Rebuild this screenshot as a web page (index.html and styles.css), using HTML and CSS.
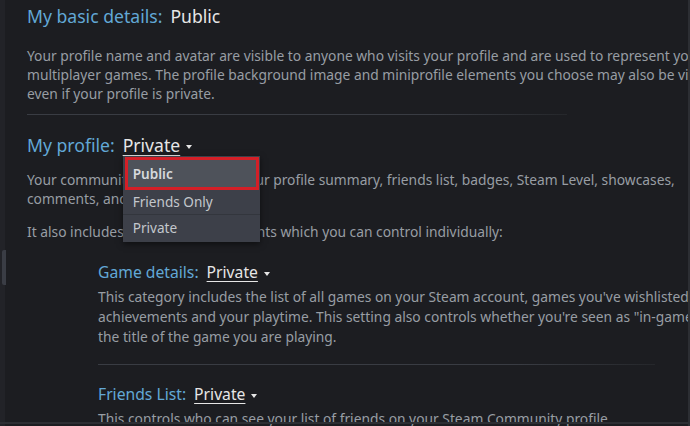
FILE: index.html
```html
<!DOCTYPE html>
<html>
<head>
<meta charset="utf-8">
<link rel="stylesheet" href="styles.css">
</head>
<body>
<div class="frame">
  <div class="left-strip"><div class="tab"></div></div>
  <div class="content">
    <section class="block">
      <h2 class="title"><span class="label">My basic details:</span><span class="value">Public</span></h2>
      <p class="desc first">Your profile name and avatar are visible to anyone who visits your profile and are used to represent you in<br>multiplayer games. The profile background image and miniprofile elements you choose may also be visible<br>even if your profile is private.</p>
    </section>
    <div class="sep"></div>
    <section class="block">
      <h2 class="title"><span class="label">My profile:</span><span class="drop"><span class="dtext">Private</span><span class="caret"></span>
        <span class="menu">
          <span class="item active">Public</span>
          <span class="item">Friends Only</span>
          <span class="item">Private</span>
        </span></span></h2>
      <p class="desc second">Your community profile includes your profile summary, friends list, badges, Steam Level, showcases,<br>comments, and group membership.</p>
      <p class="desc also">It also includes more specific elements which you can control individually:</p>
    </section>
    <section class="sub">
      <h3 class="title small"><span class="label">Game details:</span><span class="drop"><span class="dtext">Private</span><span class="caret"></span></span></h3>
      <p class="desc">This category includes the list of all games on your Steam account, games you've wishlisted, your<br>achievements and your playtime. This setting also controls whether you're seen as "in-game" and<br>the title of the game you are playing.</p>
      <div class="sep sub-sep"></div>
      <h3 class="title small"><span class="label">Friends List:</span><span class="drop"><span class="dtext">Private</span><span class="caret"></span></span></h3>
      <p class="desc">This controls who can see your list of friends on your Steam Community profile.</p>
    </section>
  </div>
  <div class="right-strip"></div>
  <div class="bottom-strip"></div>
</div>
</body>
</html>
```
FILE: styles.css
```css
html, body {
  margin: 0;
  padding: 0;
  background: #1c1d21;
  overflow: hidden;
}
.frame {
  position: relative;
  width: 690px;
  height: 426px;
  display: flex;
  overflow: hidden;
  font-family: "Noto Sans", "Open Sans", sans-serif;
}
.left-strip {
  width: 5px;
  flex: none;
  background: #222328;
  padding-top: 250px;
  box-sizing: border-box;
}
.tab {
  width: 4px;
  height: 35px;
  margin-left: 2px;
  background: #3a3d45;
  border-radius: 2px 0 0 2px;
}
.content {
  flex: 1;
  padding-left: 22px;
  padding-top: 3px;
  white-space: nowrap;
  min-width: 0;
}
.right-strip {
  position: absolute;
  right: 0;
  top: 0;
  width: 2px;
  height: 100%;
  background: #2c2e33;
}
.bottom-strip {
  position: absolute;
  left: 0;
  bottom: 2px;
  width: 100%;
  height: 2px;
  background: #2c2e33;
}
.title {
  margin: 0;
  font-weight: normal;
  font-size: 17.6px;
  line-height: 26px;
  color: #e6e6e6;
}
.label {
  color: #62a8d6;
  margin-right: 8px;
}
.value {
  color: #e6e6e6;
}
.desc {
  margin: 0;
  font-size: 13.8px;
  line-height: 19px;
  color: #989da4;
}
.desc.first {
  margin-top: 17px;
}
.desc.second {
  margin-top: 12px;
}
.desc.also {
  margin-top: 14px;
}
.sep {
  height: 1px;
  width: 540px;
  margin: 11px 0 17px;
  background: linear-gradient(to right, #393c43, #393c43 75%, #25272b);
}
.drop {
  position: relative;
  color: #e6e6e6;
}
.dtext {
  text-decoration: underline;
  text-decoration-thickness: 1px;
  text-underline-offset: 3px;
}
.caret {
  display: inline-block;
  width: 0;
  height: 0;
  margin-left: 6px;
  vertical-align: middle;
  border-left: 3.5px solid transparent;
  border-right: 3.5px solid transparent;
  border-top: 4px solid #e6e6e6;
}
.menu {
  position: absolute;
  left: 0;
  top: 23px;
  width: 137px;
  display: flex;
  flex-direction: column;
  background: #3d4049;
  box-shadow: 0 2px 6px rgba(0,0,0,0.5);
  padding: 1px 0 1px;
  z-index: 2;
}
.item {
  display: block;
  font-size: 13.6px;
  line-height: 24px;
  padding-left: 10px;
  color: #c3c7cc;
  border-bottom: 1px solid #33363d;
}
.item:last-child {
  border-bottom: none;
  line-height: 26px;
}
.item.active {
  margin: 0 1px 0 2px;
  padding-left: 5px;
  background: #4e525a;
  border: 3px solid #d41f27;
  line-height: 27px;
  font-weight: 600;
  color: #d6d9dc;
}
.sub {
  padding-left: 71px;
  margin-top: 20px;
}
.title.small {
  font-size: 15.7px;
  line-height: 22px;
}
.sub .desc {
  margin-top: 4px;
  line-height: 20px;
}
.sub .desc:last-child {
  margin-top: 4px;
}
.sub-sep {
  width: 557px;
  margin: 17px 0 18px;
}
```
